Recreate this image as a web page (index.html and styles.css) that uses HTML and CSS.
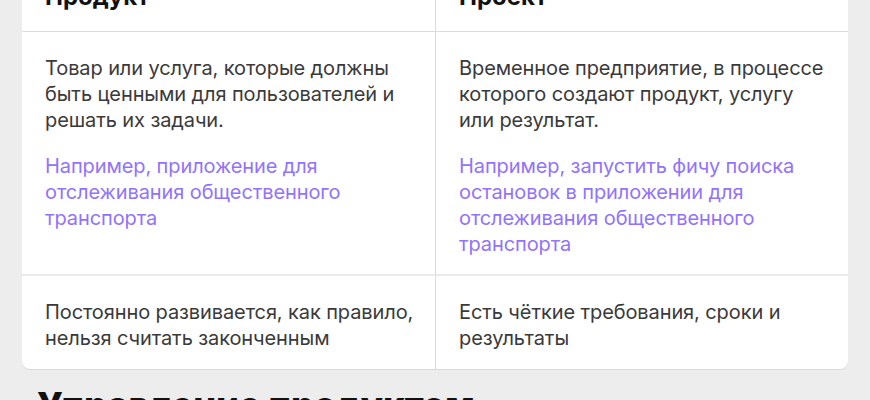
FILE: index.html
```html
<!DOCTYPE html>
<html lang="ru">
<head>
<meta charset="utf-8">
<link rel="stylesheet" href="styles.css">
</head>
<body>
<div class="page">
  <div class="card">
    <div class="cell head">Продукт</div>
    <div class="cell head right">Проект</div>
    <div class="cell row1">
      <p class="txt">Товар или услуга, которые должны быть ценными для пользователей и решать их задачи.</p>
      <p class="txt ex">Например, приложение для отслеживания общественного транспорта</p>
    </div>
    <div class="cell row1 right">
      <p class="txt">Временное предприятие, в процессе которого создают продукт, услугу или результат.</p>
      <p class="txt ex">Например, запустить фичу поиска остановок в приложении для отслеживания общественного транспорта</p>
    </div>
    <div class="cell row2">
      <p class="txt">Постоянно развивается, как правило, нельзя считать законченным</p>
    </div>
    <div class="cell row2 right">
      <p class="txt">Есть чёткие требования, сроки и результаты</p>
    </div>
  </div>
  <h2 class="next">Управление продуктом</h2>
</div>
</body>
</html>
```
FILE: styles.css
```css
html, body {
  margin: 0;
  padding: 0;
  background: #ededed;
}
body {
  font-family: Inter, "Noto Sans", sans-serif;
  color: #333;
  overflow: hidden;
}
.page {
  width: 826px;
  margin: -29px 0 0 22px;
}
.card {
  background: #fff;
  border-radius: 8px;
  box-shadow: 0 1px 0 #d9d9d9;
  display: grid;
  grid-template-columns: 413px 413px;
}
.cell {
  padding: 23px 8px 17px 23px;
}
.right {
  border-left: 1px solid #dcdcdc;
  padding-right: 22px;
}
.head {
  font-size: 24px;
  line-height: 32px;
  font-weight: 700;
  color: #111;
  border-bottom: 1px solid #dcdcdc;
  padding-top: 10px;
  padding-bottom: 18px;
}
.row1 {
  border-bottom: 2px solid #ebebeb;
}
.row2 {
  padding-bottom: 18px;
}
.txt {
  margin: 0;
  font-size: 20px;
  line-height: 26px;
  letter-spacing: -0.1px;
  color: #3a3a3a;
}
.txt + .txt {
  margin-top: 20px;
}
.ex {
  color: #9173ff;
}
.next {
  margin: 14px 0 0 15px;
  font-size: 36px;
  line-height: 44px;
  font-weight: 800;
  color: #111;
}
```
